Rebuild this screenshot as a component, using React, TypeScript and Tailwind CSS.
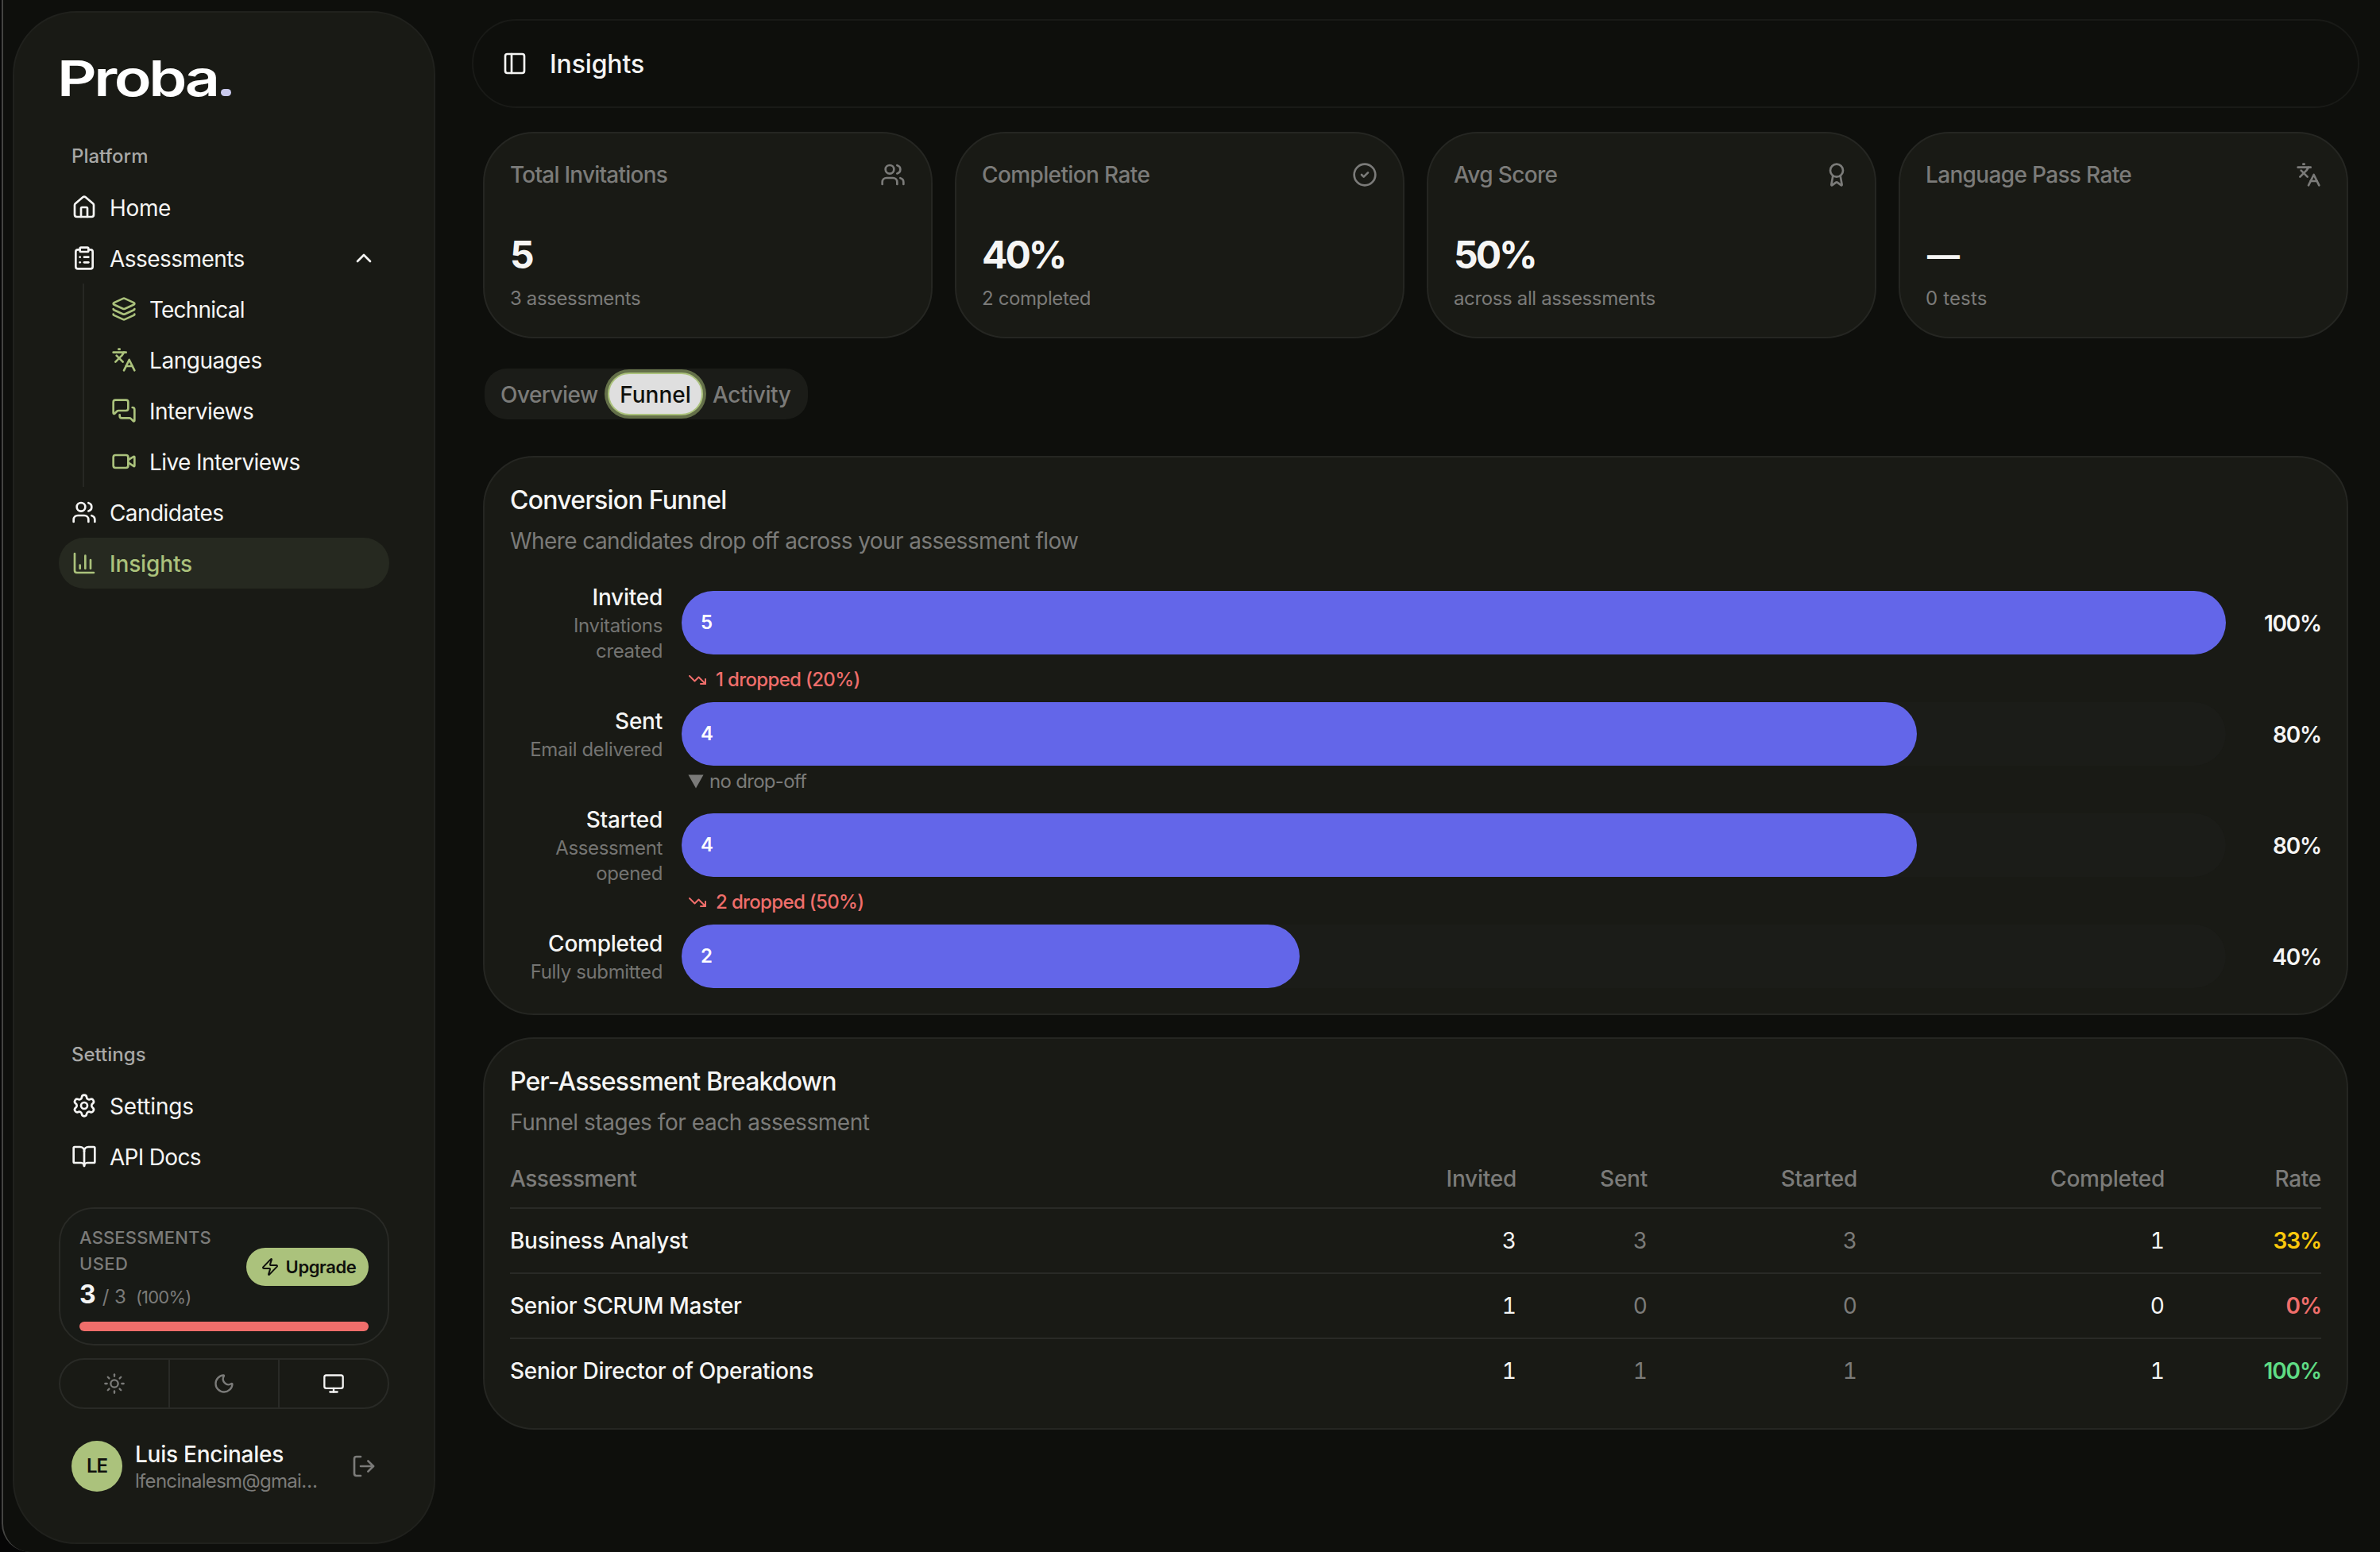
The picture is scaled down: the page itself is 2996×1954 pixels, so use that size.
import React from 'react';
import {
  Award,
  BookOpen,
  ChartColumn,
  ChevronUp,
  CircleCheck,
  ClipboardList,
  House,
  Languages,
  Layers,
  LogOut,
  MessagesSquare,
  Monitor,
  Moon,
  PanelLeft,
  Settings,
  Sun,
  TrendingDown,
  Users,
  Video,
  Zap,
  type LucideIcon,
} from 'lucide-react';

function Logo() {
  return (
    <div className="flex h-14 items-end gap-[5px]">
      <svg width="199" height="56" viewBox="0 0 199 56" className="block overflow-visible">
        <text
          x="-1.6"
          y="50.5"
          transform="scale(1.235 1)"
          fontFamily="Inter, sans-serif"
          fontSize="62.5"
          fontWeight="600"
          letterSpacing="-2.8"
          fill="#ffffff"
        >
          Proba
        </text>
      </svg>
      <span className="mb-[5px] h-[9px] w-[13px] rounded-full bg-[#c9c9ec]" />
    </div>
  );
}

function NavRow({
  icon: Icon,
  label,
  tracking = '',
  active = false,
  chevron = false,
}: {
  icon: LucideIcon;
  label: string;
  tracking?: string;
  active?: boolean;
  chevron?: boolean;
}) {
  return (
    <div
      className={`flex h-16 items-center gap-4 rounded-full px-4 text-[28px] ${
        active ? 'bg-[#262920] font-medium text-[#abc27c]' : 'text-[#f5f5f4]'
      }`}
    >
      <Icon size={32} />
      <span className={`pt-0.5 ${tracking}`}>{label}</span>
      {chevron && <ChevronUp size={32} className="ml-auto" />}
    </div>
  );
}

function SubRow({ icon: Icon, label, tracking }: { icon: LucideIcon; label: string; tracking: string }) {
  return (
    <div className="flex h-16 items-center gap-4 text-[28px] text-[#f5f5f4]">
      <Icon size={32} className="text-[#abc27c]" />
      <span className={`pt-0.5 ${tracking}`}>{label}</span>
    </div>
  );
}

function Sidebar() {
  return (
    <aside className="flex h-[1930px] w-[532px] shrink-0 flex-col rounded-[80px] border-2 border-[#20211d] bg-[#191a15] px-14 pt-[54px] pb-16">
      <div className="mb-[39px]">
        <Logo />
      </div>

      <div className="flex h-16 items-center px-4 text-[24px] font-medium text-[#a8a8a6]">Platform</div>
      <NavRow icon={House} label="Home" tracking="tracking-[-0.35px]" />
      <NavRow icon={ClipboardList} label="Assessments" tracking="tracking-[-0.55px]" chevron />
      <div className="ml-[30px] border-l-2 border-[#262723] pl-[34px]">
        <SubRow icon={Layers} label="Technical" tracking="tracking-[-0.8px]" />
        <SubRow icon={Languages} label="Languages" tracking="tracking-[-0.45px]" />
        <SubRow icon={MessagesSquare} label="Interviews" tracking="tracking-[-0.5px]" />
        <SubRow icon={Video} label="Live Interviews" tracking="tracking-[-0.58px]" />
      </div>
      <NavRow icon={Users} label="Candidates" tracking="tracking-[-0.6px]" />
      <NavRow icon={ChartColumn} label="Insights" tracking="tracking-[-0.15px]" active />

      <div className="mt-auto flex h-16 items-center px-4 text-[24px] font-medium text-[#a8a8a6]">Settings</div>
      <NavRow icon={Settings} label="Settings" tracking="tracking-[-0.15px]" />
      <NavRow icon={BookOpen} label="API Docs" tracking="tracking-[-0.7px]" />

      <div className="mt-8 rounded-[44px] border-2 border-[#292a26] bg-[#181a16] px-6 pt-5 pb-4">
        <div className="flex items-center justify-between">
          <div>
            <div className="w-[180px] text-[22px] leading-[33px] font-medium text-[#7b7b79]">
              <span className="tracking-[0.15px]">ASSESSMENTS</span>
              <br />
              <span className="tracking-[0.4px]">USED</span>
            </div>
            <div className="flex h-10 items-baseline pt-0.5 leading-10">
              <span className="text-[32px] font-bold text-[#f5f5f4]">3</span>
              <span className="ml-2 text-[24px] text-[#7b7b79]">/ 3</span>
              <span className="ml-3 text-[22px] tracking-[-0.8px] text-[#7b7b79]">(100%)</span>
            </div>
          </div>
          <button className="flex h-12 w-[154px] shrink-0 items-center justify-center gap-2 rounded-full bg-[#abc27c] pl-0.5 text-[22px] font-semibold tracking-[-0.4px] text-[#10110d]">
            <Zap size={24} />
            Upgrade
          </button>
        </div>
        <div className="mt-4 h-3 rounded-full bg-[#ef6e6b]" />
      </div>

      <div className="mt-4 flex h-16 divide-x-2 divide-[#292a26] rounded-full border-2 border-[#292a26] text-[#7b7b79]">
        <div className="flex flex-1 items-center justify-center">
          <Sun size={28} />
        </div>
        <div className="flex flex-1 items-center justify-center">
          <Moon size={28} />
        </div>
        <div className="flex flex-1 items-center justify-center">
          <Monitor size={28} className="text-[#f5f5f4]" />
        </div>
      </div>

      <div className="mt-10 flex h-16 items-center px-4">
        <div className="flex size-16 items-center justify-center rounded-full bg-[#abc27c] text-[24px] font-semibold tracking-[-1px] text-[#10110d]">
          LE
        </div>
        <div className="ml-4 pt-0.5">
          <div className="text-[28px] leading-9 font-medium tracking-[-0.25px] text-[#f5f5f4]">Luis Encinales</div>
          <div className="text-[24px] leading-8 tracking-[-0.7px] text-[#7b7b79]">lfencinalesm@gmai…</div>
        </div>
        <LogOut size={32} className="ml-auto text-[#7b7b79]" />
      </div>
    </aside>
  );
}

const stats: {
  title: string;
  titleClass: string;
  icon: LucideIcon;
  value: string;
  valueClass: string;
  note: string;
  noteClass: string;
}[] = [
  {
    title: 'Total Invitations',
    titleClass: 'tracking-[-0.78px]',
    icon: Users,
    value: '5',
    valueClass: 'text-[48px]',
    note: '3 assessments',
    noteClass: 'tracking-[-0.38px]',
  },
  {
    title: 'Completion Rate',
    titleClass: 'tracking-[-0.62px]',
    icon: CircleCheck,
    value: '40%',
    valueClass: 'text-[48px] tracking-[-3px]',
    note: '2 completed',
    noteClass: 'tracking-[-0.38px]',
  },
  {
    title: 'Avg Score',
    titleClass: 'tracking-[-0.65px]',
    icon: Award,
    value: '50%',
    valueClass: 'text-[48px] tracking-[-3px]',
    note: 'across all assessments',
    noteClass: 'tracking-[-0.36px]',
  },
  {
    title: 'Language Pass Rate',
    titleClass: 'tracking-[-0.66px]',
    icon: Languages,
    value: '—',
    valueClass: 'text-[41px] pl-0.5',
    note: '0 tests',
    noteClass: 'tracking-[0.15px]',
  },
];

function StatCards() {
  return (
    <div className="grid grid-cols-4 gap-7">
      {stats.map((s) => (
        <div key={s.title} className="h-[260px] rounded-[64px] border-2 border-[#252622] bg-[#191a15] p-8">
          <div className="flex h-10 items-center justify-between text-[28px] font-medium text-[#7b7b79]">
            <span className={s.titleClass}>{s.title}</span>
            <s.icon size={32} />
          </div>
          <div className={`mt-[49px] leading-[64px] font-bold text-[#f5f5f4] ${s.valueClass}`}>{s.value}</div>
          <div className={`mt-[7px] text-[24px] leading-8 text-[#7b7b79] ${s.noteClass}`}>{s.note}</div>
        </div>
      ))}
    </div>
  );
}

function Tabs() {
  return (
    <div className="ml-0.5 flex h-16 w-[407px] items-center gap-3 rounded-[28px] bg-[#1b1c18] pl-5 text-[28px] font-medium text-[#7b7b79]">
      <span className="w-[123px] pt-px tracking-[-0.55px]">Overview</span>
      <span className="flex h-[54px] w-[120px] items-center justify-center rounded-full border-2 border-[#abc27c] bg-[#dfdfdf] pt-px text-[#10110d] ring-4 ring-[#647049]">
        Funnel
      </span>
      <span className="pt-px tracking-[-0.4px]">Activity</span>
    </div>
  );
}

function CardHeading({
  title,
  note,
  titleClass,
  noteClass,
}: {
  title: string;
  note: string;
  titleClass: string;
  noteClass: string;
}) {
  return (
    <div className="pt-0.5">
      <h2 className={`text-[32px] leading-10 font-medium text-[#f5f5f4] ${titleClass}`}>{title}</h2>
      <p className={`mt-[11px] -mb-px text-[28px] leading-10 text-[#7b7b79] ${noteClass}`}>{note}</p>
    </div>
  );
}

const stages = [
  { name: 'Invited', note: 'Invitations created', count: 5, pct: 100, drop: '1 dropped (20%)' },
  { name: 'Sent', note: 'Email delivered', count: 4, pct: 80, drop: null },
  { name: 'Started', note: 'Assessment opened', count: 4, pct: 80, drop: '2 dropped (50%)' },
  { name: 'Completed', note: 'Fully submitted', count: 2, pct: 40, drop: null },
];

function Funnel() {
  return (
    <section className="mt-[46px] rounded-[64px] border-2 border-[#252622] bg-[#191a15] p-8">
      <CardHeading
        title="Conversion Funnel"
        note="Where candidates drop off across your assessment flow"
        titleClass="tracking-[-0.75px]"
        noteClass="tracking-[-0.58px]"
      />
      <div className="mt-8">
        {stages.map((s, i) => (
          <React.Fragment key={s.name}>
            <div className="flex items-center">
              <div className="w-48 text-right">
                <div className="text-[28px] leading-10 font-medium tracking-[-0.25px] text-[#f5f5f4]">{s.name}</div>
                <div className="text-[24px] leading-8 tracking-[-0.35px] text-[#747472]">{s.note}</div>
              </div>
              <div className="ml-6 h-20 flex-1 rounded-full bg-[#1b1c18]">
                <div
                  className="flex h-20 items-center rounded-full bg-[#6366e9] pl-6 text-[24px] font-semibold text-white"
                  style={{ width: `${s.pct}%` }}
                >
                  {s.count}
                </div>
              </div>
              <div className="ml-6 w-24 pt-px text-right text-[28px] font-semibold tracking-[-1.2px] text-[#f5f5f4]">
                {s.pct}%
              </div>
            </div>
            {i < stages.length - 1 && (
              <div className="mt-1 mb-3 ml-56 flex h-8 items-center text-[24px]">
                {s.drop ? (
                  <div className="flex items-center gap-[11px] font-medium text-[#ef6e6b]">
                    <TrendingDown size={24} />
                    <span className="tracking-[-0.65px]">{s.drop}</span>
                  </div>
                ) : (
                  <div className="flex items-center gap-[7px] text-[#7b7b79]">
                    <svg width="20" height="18" viewBox="0 0 20 18">
                      <path d="M0.5 0.5h19L10 17.5z" fill="currentColor" />
                    </svg>
                    <span className="tracking-[-0.7px]">no drop-off</span>
                  </div>
                )}
              </div>
            )}
          </React.Fragment>
        ))}
      </div>
    </section>
  );
}

const rows = [
  { name: 'Business Analyst', nums: [3, 3, 3, 1], rate: '33%', rateClass: 'text-[#fcc90c]' },
  { name: 'Senior SCRUM Master', nums: [1, 0, 0, 0], rate: '0%', rateClass: 'text-[#ef6e6b]' },
  { name: 'Senior Director of Operations', nums: [1, 1, 1, 1], rate: '100%', rateClass: 'text-[#5fdc84]' },
];

function Breakdown() {
  return (
    <section className="mt-7 rounded-[64px] border-2 border-[#252622] bg-[#191a15] p-8">
      <CardHeading
        title="Per-Assessment Breakdown"
        note="Funnel stages for each assessment"
        titleClass="tracking-[-0.88px]"
        noteClass="tracking-[-0.45px]"
      />
      <div className="mt-4 divide-y-2 divide-[#292a26] text-[28px] text-[#f5f5f4]">
        <div className="box-content grid h-[72px] grid-cols-[1fr_180px_165px_264px_387px_197px] items-center text-right font-medium tracking-[-0.25px] text-[#7b7b79]">
          <span className="text-left tracking-[-0.5px]">Assessment</span>
          <span>Invited</span>
          <span>Sent</span>
          <span>Started</span>
          <span>Completed</span>
          <span>Rate</span>
        </div>
        {rows.map((r) => (
          <div
            key={r.name}
            className="box-content grid h-20 grid-cols-[1fr_180px_165px_264px_387px_197px] items-center text-right tabular-nums"
          >
            <span className="text-left font-medium tracking-[-0.3px]">{r.name}</span>
            <span>{r.nums[0]}</span>
            <span className="text-[#7b7b79]">{r.nums[1]}</span>
            <span className="text-[#7b7b79]">{r.nums[2]}</span>
            <span>{r.nums[3]}</span>
            <span className={`font-semibold tracking-[-1.1px] normal-nums ${r.rateClass}`}>{r.rate}</span>
          </div>
        ))}
      </div>
    </section>
  );
}

export default function App() {
  return (
    <div className="h-[1954px] w-[2996px] overflow-hidden bg-[#060606] pl-0.5 font-['Inter',sans-serif]">
      <div className="flex h-full rounded-bl-[36px] border-l-2 border-[#444442] bg-[#0e0f0c] pt-[14px] pl-3">
        <Sidebar />
        <main className="ml-[46px] w-[2376px] pt-2.5">
          <header className="flex h-28 items-center rounded-full border-2 border-[#191a17] pl-9 text-[#f5f5f4]">
            <PanelLeft size={32} />
            <h1 className="ml-7 pt-px text-[32px] font-medium tracking-[-0.15px]">Insights</h1>
          </header>
          <div className="px-3.5 pt-[30px]">
            <StatCards />
            <div className="mt-[38px]">
              <Tabs />
            </div>
            <Funnel />
            <Breakdown />
          </div>
        </main>
      </div>
    </div>
  );
}
